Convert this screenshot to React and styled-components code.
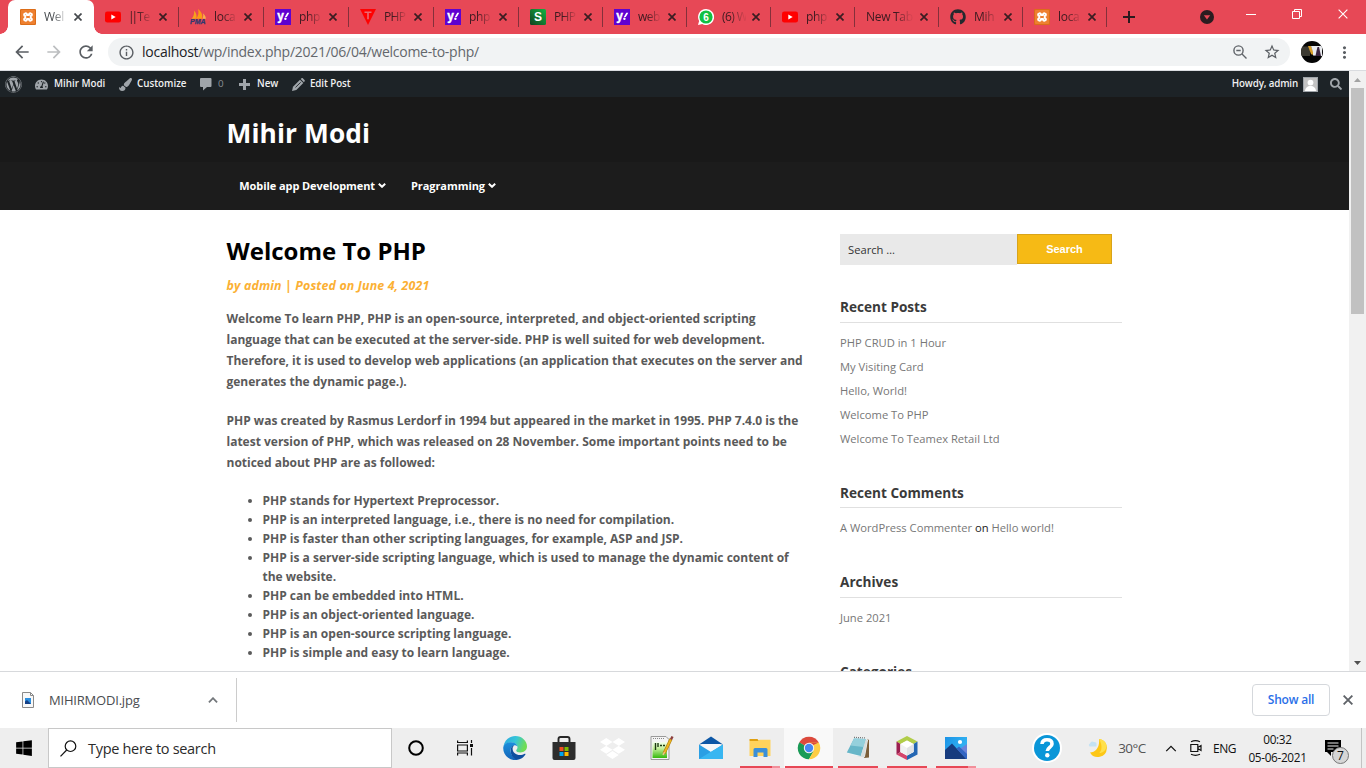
import React from 'react';
import styled, { createGlobalStyle, css } from 'styled-components';
import { FaWordpress, FaTachometerAlt, FaPaintBrush, FaGithub, FaWindows, FaDropbox, FaSearch } from 'react-icons/fa';
import { MdArrowBack, MdArrowForward, MdRefresh, MdInfoOutline, MdMoreVert, MdStarBorder } from 'react-icons/md';

const RED = '#e74856';
const UI = '"Open Sans", "Noto Sans", sans-serif';

const Global = createGlobalStyle`
  *, *::before, *::after { box-sizing: border-box; }
  html, body { margin: 0; padding: 0; overflow: hidden; }
  body { font-family: ${UI}; background: #fff; }
  h1, h2, h3, p, ul { margin: 0; padding: 0; }
  svg { display: block; flex: none; }
`;

const Screen = styled.div`
  width: 1366px;
  height: 768px;
  display: flex;
  flex-direction: column;
  overflow: hidden;
`;

/* ---------- browser chrome ---------- */
const TabStrip = styled.div`
  height: 34px;
  flex: none;
  display: flex;
  padding-left: 8px;
  background: ${RED};
`;
const Tab = styled.div`
  position: relative;
  width: ${p => p.$w}px;
  height: 34px;
  flex: none;
  display: flex;
  align-items: center;
  padding-left: 12px;
  color: #3c1a20;
  ${p => p.$active && css`
    background: #fff;
    border-radius: 7px 7px 0 0;
    width: 86px;
    margin-right: -1px;
    color: #45494d;
    &::before, &::after {
      content: '';
      position: absolute;
      bottom: 0;
      width: 8px;
      height: 8px;
    }
    &::before { left: -8px; background: radial-gradient(circle at 0 0, ${RED} 7.5px, #fff 8px); }
    &::after { right: -8px; background: radial-gradient(circle at 100% 0, ${RED} 7.5px, #fff 8px); }
  `}
  ${p => p.$line && css`
    &::after {
      content: '';
      position: absolute;
      right: -1px;
      top: 7px;
      width: 1px;
      height: 20px;
      background: #84303b;
    }
  `}
`;
const TabTitle = styled.span`
  width: ${p => (p.$wide ? 48 : 24)}px;
  margin: 0 0 1px ${p => (p.$wide ? 0 : 8)}px;
  font-size: 12px;
  letter-spacing: ${p => p.$ls || -0.3}px;
  line-height: 18px;
  white-space: nowrap;
  -webkit-mask-image: linear-gradient(90deg, #000 ${p => (p.$wide ? 62 : 35)}%, rgba(0, 0, 0, 0.1) 92%);
  mask-image: linear-gradient(90deg, #000 ${p => (p.$wide ? 62 : 35)}%, rgba(0, 0, 0, 0.1) 92%);
`;
const Bars = styled.span`
  margin-left: -1px;
  letter-spacing: -3px;
  word-spacing: 2px;
`;
const TabClose = styled.span`
  margin-left: 6px;
`;
const NewTab = styled.div`
  width: 46px;
  display: grid;
  place-items: center;
`;
const WindowTools = styled.div`
  margin-left: auto;
  display: flex;
  align-items: flex-start;
`;
const ToolSlot = styled.div`
  width: ${p => p.$w}px;
  height: ${p => p.$h || 28}px;
  display: grid;
  place-items: center;
`;
const Toolbar = styled.div`
  height: 37px;
  flex: none;
  display: flex;
  align-items: center;
  padding: 0 10px 0 12px;
  background: #fff;
  border-bottom: 1px solid #dadce0;
  color: #5a5e63;
`;
const NavButton = styled.span`
  width: 20px;
  margin-right: 12px;
  color: ${p => (p.$off ? '#bcbec0' : '#5a5e63')};
`;
const Omnibox = styled.div`
  width: 1182px;
  height: 28px;
  display: flex;
  align-items: center;
  padding: 0 9px 0 10px;
  border-radius: 14px;
  background: #f1f3f4;
`;
const Url = styled.span`
  flex: 1;
  margin-left: 7px;
  font-size: 14px;
  letter-spacing: -0.26px;
  line-height: 20px;
  color: #63676c;
  b { font-weight: 400; color: #202124; }
`;
const OmniTools = styled.div`
  display: flex;
  align-items: center;
  gap: 16px;
`;
const Avatar = styled.div`
  margin: 0 12px 0 11px;
`;

/* ---------- page ---------- */
const Viewport = styled.div`
  height: 600px;
  flex: none;
  display: flex;
  overflow: hidden;
`;
const Page = styled.div`
  width: 1349px;
  height: 600px;
  overflow: hidden;
  background: #fff;
`;
const AdminBar = styled.div`
  height: 26px;
  display: flex;
  align-items: center;
  padding: 0 7px 0 5px;
  background: #1d2327;
  color: #f0f0f1;
  font: 600 9.8px/26px "Open Sans", sans-serif;
  svg { color: #a0a5aa; }
`;
const AdminItem = styled.span`
  display: flex;
  align-items: center;
  gap: ${p => p.$gap || 6}px;
  width: ${p => p.$w}px;
  letter-spacing: ${p => p.$ls || 0}px;
  white-space: nowrap;
`;
const Muted = styled.span`
  color: #8a8f94;
  font-weight: 400;
`;
const Howdy = styled.span`
  display: flex;
  align-items: center;
  gap: 5px;
  margin-left: auto;
  margin-right: 12px;
  letter-spacing: -0.15px;
`;
const SiteHead = styled.header`
  height: 65px;
  padding: 17px 0 0 226.5px;
  background: #191919;
  h1 { color: #fff; font-size: 26.3px; line-height: 38px; font-weight: 700; letter-spacing: 0.1px; }
`;
const SiteNav = styled.nav`
  height: 48px;
  display: flex;
  align-items: center;
  gap: 25px;
  padding: 0 0 1px 239.3px;
  background: #1c1c1c;
  color: #fff;
  font-size: 11px;
  font-weight: 700;
`;
const NavLink = styled.a`
  display: flex;
  align-items: center;
  gap: 3px;
  letter-spacing: -0.08px;
`;
const Columns = styled.div`
  display: flex;
  gap: 32px;
  padding: 24px 0 0 226.5px;
`;
const Article = styled.article`
  width: 581.5px;
  color: #5a5a5a;
  font-size: 12px;
  font-weight: 700;
  white-space: nowrap;
`;
const PostTitle = styled.h2`
  font-size: 24px;
  line-height: 34px;
  color: #000;
`;
const Meta = styled.div`
  margin: 9px 0 13px;
  font-size: 12.4px;
  letter-spacing: 0.13px;
  font-style: italic;
  font-weight: 700;
  line-height: 18px;
  color: #fbb034;
`;
const Para = styled.p`
  margin-bottom: 18px;
  line-height: 21px;
`;
const List = styled.ul`
  padding-left: 36px;
  line-height: 19px;
`;
const Sidebar = styled.aside`
  width: 282px;
`;
const SearchForm = styled.div`
  display: flex;
  align-items: flex-start;
  height: 31px;
  margin-bottom: 31px;
`;
const SearchInput = styled.div`
  width: 177px;
  height: 31px;
  padding-left: 8px;
  background: #e9e9e9;
  color: #333;
  font-size: 11.2px;
  line-height: 32px;
`;
const SearchButton = styled.div`
  width: 95px;
  height: 30px;
  background: #f6ba15;
  border: 1px solid #d9a41a;
  color: #fff;
  font: 700 11px/28px "Liberation Sans", Arial, sans-serif;
  text-align: center;
`;
const Widget = styled.section`
  height: ${p => p.$h}px;
`;
const WidgetTitle = styled.h3`
  height: ${p => p.$h || 27}px;
  margin-bottom: 8px;
  border-bottom: 1px solid #e0e0e0;
  color: #3a3a3a;
  font-size: 13.6px;
  font-weight: 700;
  line-height: 22px;
`;
const WidgetLine = styled.div`
  color: #777;
  font-size: 11.2px;
  line-height: 24px;
  white-space: nowrap;
  b { font-weight: 400; color: #222; }
`;
const Scrollbar = styled.div`
  width: 17px;
  display: flex;
  flex-direction: column;
  align-items: center;
  justify-content: space-between;
  background: #f1f1f1;
`;
const ScrollTrack = styled.div`
  flex: 1;
  width: 13px;
`;
const ScrollThumb = styled.div`
  height: 226px;
  background: #c1c1c1;
`;
const ScrollArrow = styled.div`
  height: 17px;
  display: grid;
  place-items: center;
`;

/* ---------- download shelf ---------- */
const Shelf = styled.div`
  height: 57px;
  flex: none;
  display: flex;
  align-items: center;
  padding-right: 13px;
  border-top: 1px solid #d7d9dc;
  background: #fff;
`;
const Download = styled.div`
  width: 237px;
  height: 44px;
  display: flex;
  align-items: center;
  padding: 0 18px 0 22px;
  border-right: 1px solid #ccc;
  color: #4a4d51;
  font-size: 13px;
`;
const FileName = styled.span`
  flex: 1;
  margin-left: 15px;
  letter-spacing: -0.2px;
`;
const ShowAll = styled.div`
  width: 78px;
  height: 32px;
  margin: 0 13px 0 auto;
  border: 1px solid #d5d8dc;
  border-radius: 4px;
  color: #2b6fe8;
  font-size: 12px;
  font-weight: 600;
  letter-spacing: -0.2px;
  line-height: 29px;
  text-align: center;
`;

/* ---------- taskbar ---------- */
const Taskbar = styled.div`
  height: 40px;
  flex: none;
  display: flex;
  background: #eee;
  color: #000;
`;
const Slot = styled.div`
  width: ${p => p.$w || 49}px;
  height: 40px;
  flex: none;
  display: flex;
  flex-direction: column;
  align-items: center;
  background: ${p => (p.$active ? '#f9f9f9' : 'transparent')};
`;
const SlotIcon = styled.div`
  height: 38px;
  padding-top: 2px;
  display: grid;
  place-items: center;
`;
const Running = styled.div`
  width: ${p => p.$w}px;
  height: 2px;
  background: ${p => (p.$more ? `linear-gradient(90deg, ${RED} 32px, #f28f9a 32px)` : RED)};
`;
const SearchBox = styled.div`
  width: 344px;
  height: 40px;
  display: flex;
  align-items: center;
  gap: 11px;
  padding-left: 11px;
  border: 1px solid #c8c8c8;
  background: #fff;
  color: #2b2b2b;
  font-size: 14.5px;
  letter-spacing: -0.3px;
`;
const Tray = styled.div`
  margin-left: auto;
  display: flex;
  align-items: center;
  font-size: 12px;
`;
const TrayItem = styled.div`
  width: ${p => p.$w}px;
  display: flex;
  justify-content: center;
  letter-spacing: ${p => p.$ls || 0}px;
  font-size: ${p => p.$fs || 12}px;
  color: ${p => p.$c || '#111'};
  white-space: nowrap;
`;
const Clock = styled.div`
  width: 65px;
  display: flex;
  flex-direction: column;
  align-items: center;
  font-size: 11.8px;
  line-height: 18px;
  letter-spacing: -0.35px;
  color: #111;
  white-space: nowrap;
`;
const DesktopEdge = styled.div`
  width: 5px;
  height: 40px;
  border-left: 1px solid #c3c3c3;
`;

/* ---------- drawings ---------- */
const Cross = ({ s = 8, c = '#3a1d22', w = 1.7 }) => (
  <svg width={s} height={s} viewBox="0 0 8 8" stroke={c} strokeWidth={w}><path d="M.5 .5 7.5 7.5M7.5 .5 .5 7.5" /></svg>
);
const Xampp = () => (
  <svg width="16" height="16" viewBox="0 0 16 16">
    <rect width="16" height="16" rx="1" fill="#dc6d18" />
    <rect x="1" y="1" width="14" height="14" rx="1" fill="#ee8030" />
    <path d="M5.2 4.400c-1.500.3-1.400 2.100 0 2.600v2c-1.400.5-1.500 2.300 0 2.600 1.300.3 2-.5 1.800-1.600h2c-.2 1.100.5 1.900 1.800 1.600 1.500-.3 1.400-2.100 0-2.600V7c1.400-.5 1.500-2.300 0-2.600-1.300-.3-2 .5-1.800 1.600H7C7.200 4.900 6.500 4.100 5.200 4.400z" fill="none" stroke="#fff" strokeWidth="2" strokeLinejoin="round" />
  </svg>
);
const Youtube = () => (
  <svg width="16" height="16" viewBox="0 0 16 16"><rect y="2.500" width="16" height="11" rx="2.300" fill="#f00" /><path d="M6.300 5.500v5L10.700 8z" fill="#fff" /></svg>
);
const Pma = () => (
  <svg width="16" height="16" viewBox="0 0 16 16">
    <path d="M1.500 9.800C3.500 8 4.500 5 4 1.500 6.500 4 7 7 6.300 9.800z" fill="#f7a21b" />
    <path d="M6 9.800C8.500 7 9 3.500 8 0c4 3 5 7 4 9.800z" fill="#fb9b14" />
    <path d="M12.300 9.800c1.200-2 1.200-4 .5-5.500 2 1.500 2.900 3 3.100 5.500z" fill="#f9b04a" />
    <text x="0" y="15.300" textLength="15.500" lengthAdjust="spacingAndGlyphs" fontFamily="Liberation Sans" fontWeight="700" fontStyle="italic" fontSize="6.800" fill="#2f3870" stroke="#2f3870" strokeWidth=".25">PMA</text>
  </svg>
);
const Yahoo = () => (
  <svg width="16" height="16" viewBox="0 0 16 16"><rect width="16" height="16" fill="#5f01d1" /><text x="2.300" y="10.500" fontFamily="Liberation Sans" fontWeight="700" fontSize="12" fill="#fff" stroke="#fff" strokeWidth=".4">y</text><path d="M9.800 8 12.300 3.800h2L11.800 8z" fill="#fff" /><circle cx="10.400" cy="9.800" r="1.200" fill="#fff" /></svg>
);
const RedTriangle = () => (
  <svg width="16" height="16" viewBox="0 0 16 16"><path d="M0 0h16L8 16z" fill="#f00" /><path d="M4.500 3.200h7M8 3.200v7" stroke="#e86a74" strokeWidth="1.600" /></svg>
);
const GreenS = () => (
  <svg width="16" height="16" viewBox="0 0 16 16">
    <defs><linearGradient id="gs" x1="0" y1="1" x2="1" y2="0"><stop offset="0" stopColor="#12401f" /><stop offset="1" stopColor="#11b543" /></linearGradient></defs>
    <rect width="16" height="16" rx="1.500" fill="url(#gs)" /><text x="8" y="12.300" textAnchor="middle" fontFamily="Liberation Sans" fontWeight="700" fontSize="12" fill="#fff">S</text>
  </svg>
);
const Whatsapp = () => (
  <svg width="16" height="16" viewBox="0 0 16 16"><path d="M8 0a8 8 0 1 1-3.800 15L0 16l1.100-4A8 8 0 0 1 8 0z" fill="#fff" /><circle cx="8" cy="8" r="6.600" fill="#10c143" /><text x="8" y="11.600" textAnchor="middle" fontFamily="Liberation Sans" fontWeight="700" fontSize="10" fill="#fff">6</text></svg>
);
const Pencil = () => (
  <svg width="13" height="13" viewBox="0 0 13 13"><path d="M0 13l1-4.300L8 1.700l3.300 3.300L4.300 12z" fill="#a0a5aa" /><path d="M8.700 1l.8-.7c.5-.4 1-.3 1.500.1l1.500 1.600c.4.500.4 1 0 1.400l-.6.800z" fill="#a0a5aa" /><path d="M3.500 9.400l5.200-5.100" stroke="#1d2327" strokeWidth=".9" /></svg>
);
const Bubble = () => (
  <svg width="13" height="13" viewBox="0 0 13 13"><path d="M2 0h9.500Q12.500 0 12.500 1v7q0 1-1 1H8L4 12.500V9H2Q1 9 1 8V1Q1 0 2 0z" fill="#a0a5aa" /></svg>
);
const Person = () => (
  <svg width="15" height="15" viewBox="0 0 15 15"><rect x=".5" y=".5" width="14" height="14" fill="#c3c3c3" stroke="#a0a5aa" /><circle cx="7.500" cy="5.600" r="2.900" fill="#fff" /><path d="M2 14c.5-3.500 2.500-4.500 4-5h3c1.500.5 3.500 1.500 4 5z" fill="#fff" /></svg>
);
const Chevron = ({ up, w = 8, h = 5, c = '#fff', sw = 2 }) => (
  <svg width={w} height={h} viewBox="0 0 8 5" fill="none" stroke={c} strokeWidth={sw}><path d={up ? 'M.6 4.400 4 1l3.400 3.400' : 'M.8 .8 4 3.800 7.200 .8'} /></svg>
);
const ProfilePic = () => (
  <svg width="22" height="22" viewBox="0 0 22 22">
    <clipPath id="pp"><circle cx="11" cy="11" r="11" /></clipPath>
    <g clipPath="url(#pp)"><rect width="22" height="22" fill="#050505" /><path d="M0 5.500h9v9.500H0z" fill="#3c3a32" /><path d="M7 5h3l2.500 6-1 3-1.500-1z" fill="#d9a02a" /><path d="M10 5H21v10l-9-.5V11z" fill="#e9ebef" /><path d="M14.500 15l1-5 1-4h1.500L20 15z" fill="#3a2440" /></g>
  </svg>
);
const Magnifier = () => (
  <svg width="17" height="17" viewBox="0 0 17 17" fill="none" stroke="#111" strokeWidth="1.200"><circle cx="10.500" cy="6.200" r="5.300" /><path d="M6.700 10 .5 16.300" /></svg>
);
const TaskView = () => (
  <svg width="18" height="16" viewBox="0 0 18 16" fill="none" stroke="#111" strokeWidth="1.200"><path d="M1.600 .5v2h9.800v-2M1.600 15.500v-2.500h9.800v2.500M1.600 5h9.800v6H1.600zM15.500 0v3M15.500 8v7.500" /><rect x="14" y="4" width="3" height="3" fill="#111" stroke="none" /></svg>
);
const Edge = () => (
  <svg width="24" height="24" viewBox="0 0 24 24">
    <defs>
      <linearGradient id="e1" x1="0" y1="0" x2="1" y2=".3"><stop offset="0" stopColor="#2aa5e0" /><stop offset=".55" stopColor="#36c6d8" /><stop offset="1" stopColor="#70dd55" /></linearGradient>
      <linearGradient id="e2" x1="0" y1="0" x2="0" y2="1"><stop offset="0" stopColor="#1b8fdc" /><stop offset="1" stopColor="#1464b8" /></linearGradient>
    </defs>
    <path d="M.4 10.500C1.500 4 6.500 0 12.300 0 19 0 24 5 24 10.300c0 4-3 6.200-6.500 6.200-3 0-4.300-1-4.300-2 0-.8 1.300-1.300 1.300-3.300C14.500 8.500 11.500 6.500 8 6.500c-3.500 0-6.300 1.500-7.600 4z" fill="url(#e1)" />
    <path d="M.2 12C.5 8.500 3.800 6.300 8 6.300c3.800 0 6 1.900 6.400 4.100-1-.9-2.200-1.200-3.300-1-2.600.5-3.900 3.100-3.500 6 .5 4.300 4.100 7.600 8.400 8.100A12 12 0 0 1 .2 12z" fill="url(#e2)" />
    <path d="M7.700 13.500c.2-2.500 1.500-4 3.400-4.100-1 .9-1.600 2-1.500 3.600.2 3.500 3.400 6 7.200 6 2 0 3.500-.4 4.900-1.200.5-.3 1 .1.700.6-1.700 2.900-5 5.200-8.400 5.200-4.300-.8-6.700-5.300-6.300-10.100z" fill="#0f4f9f" />
  </svg>
);
const Store = () => (
  <svg width="24" height="24" viewBox="0 0 24 24"><path d="M6.500 6V3q0-2 2-2h7q2 0 2 2v3" fill="none" stroke="#262626" strokeWidth="1.900" /><path d="M.5 6h23v16q0 2-2 2h-19q-2 0-2-2z" fill="#2d2d2d" /><path d="M7.500 11h4v4h-4z" fill="#f25022" /><path d="M12.500 11h4v4h-4z" fill="#7fba00" /><path d="M7.500 16h4v4h-4z" fill="#00a4ef" /><path d="M12.500 16h4v4h-4z" fill="#ffb900" /></svg>
);
const NotepadPP = () => (
  <svg width="24" height="24" viewBox="0 0 24 24">
    <defs><linearGradient id="np" x1="0" y1="0" x2="0" y2="1"><stop offset="0" stopColor="#f5fff0" /><stop offset=".4" stopColor="#c4f09a" /><stop offset="1" stopColor="#35b80c" /></linearGradient></defs>
    <path d="M1 .500h15l3 3V23.500H1z" fill="#f4f4f4" stroke="#9a9a9a" /><path d="M2.500 6h14.500v16H2.500z" fill="url(#np)" /><path d="M3 2.500h12" stroke="#888" strokeDasharray="1 1" /><path d="M5.500 7v7M8 7v4M10 9.500h2M13 9.500h2" stroke="#1c3a10" strokeWidth="1.400" /><path d="M21 3 14 17.500" stroke="#a87a10" strokeWidth="3" /><path d="M21 3 14.300 17" stroke="#edb51e" strokeWidth="1.900" /><path d="M22.500 .5 21 3.500" stroke="#8c3f3f" strokeWidth="2.400" /><path d="M14.500 16l-1.500 3" stroke="#ecc48a" strokeWidth="1.600" />
  </svg>
);
const Mail = () => (
  <svg width="24" height="24" viewBox="0 0 24 24"><path d="M2.500 8h19v9h-19z" fill="#f6f8fa" /><path d="M0 8.500 12 16 24 8.500V23H0z" fill="#2a9fe4" /><path d="M0 23 24 8.500V23z" fill="#38b6f1" /><path d="M0 8.500 12 .5l12 8L21 8H3z" fill="#0d57a6" /></svg>
);
const Explorer = () => (
  <svg width="24" height="24" viewBox="0 0 24 24"><path d="M1.500 3h8l1.500 2h-9.500z" fill="#e0a010" /><path d="M1.500 5h8.500l1.500-1.200h11V20h-21z" fill="#ffd35c" /><path d="M5.500 13.500q0-1.500 1.500-1.500h11q1.500 0 1.500 1.500V21h-4v-4.500h-6V21h-4z" fill="#3a8fd8" /></svg>
);
const Chrome = () => (
  <svg width="24" height="24" viewBox="-12 -12 24 24"><path d="M0 0-9.800-5.600A11.300 11.300 0 0 1 9.800-5.600z" fill="#dc4a3d" /><path d="M-9.800-5.600A11.300 11.300 0 0 0 0 11.300L4.900 2.800 0 0z" fill="#1a9b57" /><path d="M9.800-5.600H0V0L4.700 2.700 0 11.300A11.300 11.300 0 0 0 9.800-5.600z" fill="#fdcd45" /><path d="M-9.800-5.600-4.700 3-1 0z" fill="#1a9b57" /><path d="M-2 -5.600H9.800L0-1z" fill="#dc4a3d" /><circle r="5.200" fill="#f5f5f5" /><circle r="4.200" fill="#4587f3" /></svg>
);
const Notepad = () => (
  <svg width="24" height="24" viewBox="0 0 24 24"><path d="M20.500 2.500l2.500 1.500v17.500l-5 .5z" fill="#7b5d38" /><path d="M8 1.500 20.500 2 22 4l-3 16.500-1.500 1L1 17.500z" fill="#eef3f4" /><path d="M8 2.500 20 3 14.800 20 .8 16.500z" fill="#67b6c8" /><path d="M8 2.500 20 3 17.500 11 4.500 9.500z" fill="#95d0dc" /><path d="M14.800 20 20 3 21.300 5l-3 16.500-8-1.500z" fill="#d8dddd" /><path d="M8 1.300 20 2" stroke="#777" strokeWidth="1.200" strokeDasharray="1 1" /></svg>
);
const NetBeans = () => (
  <svg width="24" height="24" viewBox="0 0 24 24"><path d="M12 0 22.500 5.500 18.500 8 12 4.500 5.500 8 1.500 5.500z" fill="#b1cd49" /><path d="M1.500 5.500 5.500 8v8l-4 2.500z" fill="#9b1f4f" /><path d="M1.500 18.500 5.500 16l6.500 3.500V24z" fill="#d5456c" /><path d="M22.500 5.500v13L12 24v-4.500l6.500-3.500V8z" fill="#2467b3" /><path d="M12 4.500 18.500 8v8L12 19.500 5.500 16V8z" fill="#fff" /><path d="M12 12 18.500 8v8L12 19.500z" fill="#e1e3e6" /><path d="M12 12v7.500L5.500 16V8z" fill="#f0f1f2" /></svg>
);
const Photos = () => (
  <svg width="24" height="24" viewBox="0 0 24 24"><defs><linearGradient id="ph" x1="0" y1="0" x2="1" y2=".6"><stop offset="0" stopColor="#1b93e6" /><stop offset="1" stopColor="#36b8f4" /></linearGradient></defs><path d="M1 1h22v22H1z" fill="url(#ph)" /><path d="M23 8v15H12l-1-7z" fill="#6b84da" /><path d="M1 14 8 7.500 22.500 23H1z" fill="#173b7e" /><path d="M12.500 12.500 15 10.500 23 18v5h-1z" fill="#3265c2" /><circle cx="16" cy="6" r="2.100" fill="#fff" /></svg>
);
const Help = () => (
  <svg width="30" height="30" viewBox="0 0 30 30"><circle cx="15" cy="15" r="15" fill="#fff" /><circle cx="15" cy="15" r="13" fill="#0a96d8" /><path d="M10 11c.2-3 2.400-4.200 5-4.200 3 0 5 1.500 5 4.100 0 3.300-4.700 3.600-4.700 7.100" fill="none" stroke="#fff" strokeWidth="3.600" /><circle cx="15.300" cy="22.300" r="2.200" fill="#fff" /></svg>
);
const Moon = () => (
  <svg width="20" height="20" viewBox="0 0 20 20"><path d="M11 1c5 .5 8.300 4.500 7.800 9.500A9 9 0 0 1 2 14.500C7.500 14.500 12 9 11 1z" fill="#fdc716" /><path d="M11 1c5 .5 8 4 7.300 8-.5 3.500-3.300 6-7 6C15 11.500 13.500 5 11 1z" fill="#ffe04a" /><path d="M1.500 8.500q-1.500-2 .5-3Q3 2.500 6 4 9 4 8.500 7q.5 1.500-1 1.500z" fill="#c4e2f4" /></svg>
);
const Camera = () => (
  <svg width="12" height="16" viewBox="0 0 12 16" fill="none" stroke="#111" strokeWidth="1.200"><path d="M1 1.700Q5.500-.3 10 1.700M1 14.300q4.500 2 9 0M.8 4.500h7v7h-7zM7.800 7.500 11 5.500v5L7.800 8.500" /></svg>
);
const Notice = () => (
  <svg width="28" height="34" viewBox="0 0 28 34"><path d="M3 9h16v12H9v4l-4-4H3z" fill="#000" /><path d="M5.500 12h11M5.500 15h11M5.500 18h6" stroke="#eee" strokeWidth="1" /><circle cx="18.500" cy="24.500" r="8" fill="#d6d6d6" stroke="#777" /><text x="18.500" y="28.800" textAnchor="middle" fontFamily="Open Sans" fontSize="12" fill="#111">7</text></svg>
);

const TABS = [
  { icon: <Xampp />, title: 'Wel', w: 85, active: true },
  { icon: <Youtube />, title: <><Bars>|| </Bars>Te</>, w: 85, line: true },
  { icon: <Pma />, title: 'loca', w: 85, line: true },
  { icon: <Yahoo />, title: 'php', w: 85, line: true },
  { icon: <RedTriangle />, title: 'PHP', w: 85, line: true, ls: -0.6 },
  { icon: <Yahoo />, title: 'php', w: 85, line: true },
  { icon: <GreenS />, title: 'PHP', w: 84, line: true, ls: -0.6 },
  { icon: <Yahoo />, title: 'web', w: 84, line: true, ls: -0.5 },
  { icon: <Whatsapp />, title: '(6) W', w: 84, line: true, ls: -0.6 },
  { icon: <Youtube />, title: 'php', w: 84, line: true },
  { title: 'New Tab', w: 84, line: true },
  { icon: <FaGithub size={16} color="#24292e" />, title: 'Mih', w: 84, line: true },
  { icon: <Xampp />, title: 'loca', w: 84, line: true },
];

const POINTS = [
  'PHP stands for Hypertext Preprocessor.',
  'PHP is an interpreted language, i.e., there is no need for compilation.',
  'PHP is faster than other scripting languages, for example, ASP and JSP.',
  <>PHP is a server-side scripting language, which is used to manage the dynamic content of<br />the website.</>,
  'PHP can be embedded into HTML.',
  'PHP is an object-oriented language.',
  'PHP is an open-source scripting language.',
  'PHP is simple and easy to learn language.',
];

const APPS = [
  { icon: <Edge /> },
  { icon: <Store /> },
  { icon: <FaDropbox size={25} color="#fff" /> },
  { icon: <NotepadPP /> },
  { icon: <Mail /> },
  { icon: <Explorer />, run: 40, more: true },
  { icon: <Chrome />, run: 48, active: true },
  { icon: <Notepad />, run: 40 },
  { icon: <NetBeans />, run: 40 },
  { icon: <Photos />, run: 40, more: true },
];

export default function App() {
  return (
    <Screen>
      <Global />
      <TabStrip>
        {TABS.map((t, i) => (
          <Tab key={i} $w={t.w} $active={t.active} $line={t.line}>
            {t.icon}
            <TabTitle $wide={!t.icon} $ls={t.ls}>{t.title}</TabTitle>
            <TabClose><Cross c={t.active ? '#45494d' : '#3a1d22'} /></TabClose>
          </Tab>
        ))}
        <NewTab>
          <svg width="12" height="12" viewBox="0 0 12 12" stroke="#2c1a1e" strokeWidth="2"><path d="M6 0v12M0 6h12" /></svg>
        </NewTab>
        <WindowTools>
          <ToolSlot $w={42} $h={34}>
            <svg width="14" height="14" viewBox="0 0 14 14"><circle cx="7" cy="7" r="7" fill="#2a1c20" /><path d="M3.800 5.200h6.400L7 9.500z" fill={RED} /></svg>
          </ToolSlot>
          <ToolSlot $w={46}>
            <svg width="10" height="1" viewBox="0 0 10 1"><path d="M0 0h10v1H0z" fill="#fff" /></svg>
          </ToolSlot>
          <ToolSlot $w={46}>
            <svg width="10" height="10" viewBox="0 0 10 10" fill="none" stroke="#fff"><path d="M.5 2.500h7v7h-7zM2.500 2.500v-2h7v7h-2" /></svg>
          </ToolSlot>
          <ToolSlot $w={46}><Cross s={10} c="#fff" w={0.9} /></ToolSlot>
        </WindowTools>
      </TabStrip>

      <Toolbar>
        <NavButton><MdArrowBack size={20} /></NavButton>
        <NavButton $off><MdArrowForward size={20} /></NavButton>
        <NavButton><MdRefresh size={20} /></NavButton>
        <Omnibox>
          <MdInfoOutline size={17} />
          <Url><b>localhost</b>/wp/index.php/2021/06/04/welcome-to-php/</Url>
          <OmniTools>
            <svg width="14" height="14" viewBox="0 0 14 14" fill="none" stroke="#5f6368" strokeWidth="1.400"><circle cx="5.500" cy="5.500" r="4.600" /><path d="M9 9l4.500 4.500M3.300 5.500h4.400" /></svg>
            <MdStarBorder size={18} />
          </OmniTools>
        </Omnibox>
        <Avatar><ProfilePic /></Avatar>
        <MdMoreVert size={19} />
      </Toolbar>

      <Viewport>
        <Page>
          <AdminBar>
            <AdminItem $w={30}><FaWordpress size={17} /></AdminItem>
            <AdminItem $w={84}><FaTachometerAlt size={13} />Mihir Modi</AdminItem>
            <AdminItem $w={80} $gap={5}><FaPaintBrush size={13} />Customize</AdminItem>
            <AdminItem $w={40}><Bubble /><Muted>0</Muted></AdminItem>
            <AdminItem $w={53} $gap={7}>
              <svg width="11" height="11" viewBox="0 0 11 11" stroke="#a0a5aa" strokeWidth="3"><path d="M5.500 0v11M0 5.500h11" /></svg>New
            </AdminItem>
            <AdminItem $w={70} $gap={5} $ls={-0.1}><Pencil />Edit Post</AdminItem>
            <Howdy>Howdy, admin<Person /></Howdy>
            <FaSearch size={12} />
          </AdminBar>
          <SiteHead><h1>Mihir Modi</h1></SiteHead>
          <SiteNav>
            <NavLink>Mobile app Development<Chevron /></NavLink>
            <NavLink>Pragramming<Chevron /></NavLink>
          </SiteNav>
          <Columns>
            <Article>
              <PostTitle>Welcome To PHP</PostTitle>
              <Meta>by admin | Posted on June 4, 2021</Meta>
              <Para>
                Welcome To learn PHP, PHP is an open-source, interpreted, and object-oriented scripting<br />
                language that can be executed at the server-side. PHP is well suited for web development.<br />
                Therefore, it is used to develop web applications (an application that executes on the server and<br />
                generates the dynamic page.).
              </Para>
              <Para>
                PHP was created by Rasmus Lerdorf in 1994 but appeared in the market in 1995. PHP 7.4.0 is the<br />
                latest version of PHP, which was released on 28 November. Some important points need to be<br />
                noticed about PHP are as followed:
              </Para>
              <List>{POINTS.map((p, i) => <li key={i}>{p}</li>)}</List>
            </Article>
            <Sidebar>
              <SearchForm>
                <SearchInput>Search …</SearchInput>
                <SearchButton>Search</SearchButton>
              </SearchForm>
              <Widget $h={186}>
                <WidgetTitle>Recent Posts</WidgetTitle>
                {['PHP CRUD in 1 Hour', 'My Visiting Card', 'Hello, World!', 'Welcome To PHP', 'Welcome To Teamex Retail Ltd'].map(t => (
                  <WidgetLine key={t}>{t}</WidgetLine>
                ))}
              </Widget>
              <Widget $h={89}>
                <WidgetTitle $h={26}>Recent Comments</WidgetTitle>
                <WidgetLine>A WordPress Commenter <b>on</b> Hello world!</WidgetLine>
              </Widget>
              <Widget $h={90}>
                <WidgetTitle>Archives</WidgetTitle>
                <WidgetLine>June 2021</WidgetLine>
              </Widget>
              <Widget $h={90}><WidgetTitle>Categories</WidgetTitle></Widget>
            </Sidebar>
          </Columns>
        </Page>
        <Scrollbar>
          <ScrollArrow><svg width="7" height="4" viewBox="0 0 7 4"><path d="M0 4h7L3.500 0z" fill="#a3a3a3" /></svg></ScrollArrow>
          <ScrollTrack><ScrollThumb /></ScrollTrack>
          <ScrollArrow><svg width="7" height="4" viewBox="0 0 7 4"><path d="M0 0h7L3.500 4z" fill="#505050" /></svg></ScrollArrow>
        </Scrollbar>
      </Viewport>

      <Shelf>
        <Download>
          <svg width="12" height="16" viewBox="0 0 12 16"><path d="M.5 .5h8l3 3v12H.5z" fill="#f8f8f8" stroke="#8a8a8a" /><path d="M8.500 .5v3h3" fill="none" stroke="#8a8a8a" /><path d="M3 6h6v6H3z" fill="#2b8fe0" /><path d="M3 12V9.500l2-1.500 4 4z" fill="#143f85" /></svg>
          <FileName>MIHIRMODI.jpg</FileName>
          <Chevron up w={10} h={6} c="#73777b" sw={1.5} />
        </Download>
        <ShowAll>Show all</ShowAll>
        <Cross s={10} c="#5f6368" w={1.5} />
      </Shelf>

      <Taskbar>
        <Slot $w={48}><SlotIcon><FaWindows size={18} /></SlotIcon></Slot>
        <SearchBox><Magnifier />Type here to search</SearchBox>
        <Slot $w={48}><SlotIcon><svg width="16" height="16" viewBox="0 0 16 16"><circle cx="8" cy="8" r="6.800" fill="none" stroke="#000" strokeWidth="2" /></svg></SlotIcon></Slot>
        <Slot $w={50}><SlotIcon><TaskView /></SlotIcon></Slot>
        {APPS.map((a, i) => (
          <Slot key={i} $active={a.active}>
            <SlotIcon>{a.icon}</SlotIcon>
            {a.run && <Running $w={a.run} $more={a.more} />}
          </Slot>
        ))}
        <Tray>
          <TrayItem $w={80}><Help /></TrayItem>
          <TrayItem $w={22}><Moon /></TrayItem>
          <TrayItem $w={46} $fs={13.5} $ls={-0.5} $c="#555">30°C</TrayItem>
          <TrayItem $w={32}><Chevron up w={12} h={7} c="#111" sw={0.9} /></TrayItem>
          <TrayItem $w={17}><Camera /></TrayItem>
          <TrayItem $w={41} $ls={-0.4}>ENG</TrayItem>
          <Clock><span>00:32</span><span>05-06-2021</span></Clock>
          <TrayItem $w={51}><Notice /></TrayItem>
          <DesktopEdge />
        </Tray>
      </Taskbar>
    </Screen>
  );
}
